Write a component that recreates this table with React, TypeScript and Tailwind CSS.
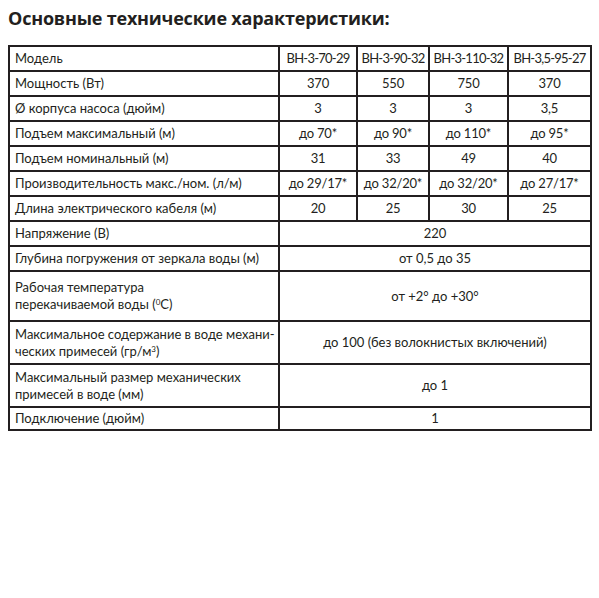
import React from 'react';

type Row = { label: React.ReactNode; values: string[]; h?: string };

const rows: Row[] = [
  { label: 'Модель', values: ['ВН-3-70-29', 'ВН-3-90-32', 'ВН-3-110-32', 'ВН-3,5-95-27'] },
  { label: 'Мощность (Вт)', values: ['370', '550', '750', '370'] },
  { label: 'Ø корпуса насоса (дюйм)', values: ['3', '3', '3', '3,5'] },
  { label: 'Подъем максимальный (м)', values: ['до 70*', 'до 90*', 'до 110*', 'до 95*'] },
  { label: 'Подъем номинальный (м)', values: ['31', '33', '49', '40'] },
  { label: 'Производительность макс./ном. (л/м)', values: ['до 29/17*', 'до 32/20*', 'до 32/20*', 'до 27/17*'] },
  { label: 'Длина электрического кабеля (м)', values: ['20', '25', '30', '25'] },
  { label: 'Напряжение (В)', values: ['220'] },
  { label: 'Глубина погружения от зеркала воды (м)', values: ['от 0,5 до 35'] },
  {
    label: (
      <>
        Рабочая температура
        <br />
        перекачиваемой воды (<sup className="text-[8px]">0</sup>С)
      </>
    ),
    values: ['от +2° до +30°'],
    h: 'h-[50px]',
  },
  {
    label: (
      <>
        Максимальное содержание в воде механи-
        <br />
        ческих примесей (гр/м<sup className="text-[8px]">3</sup>)
      </>
    ),
    values: ['до 100 (без волокнистых включений)'],
    h: 'h-[43px]',
  },
  {
    label: (
      <>
        Максимальный размер механических
        <br />
        примесей в воде (мм)
      </>
    ),
    values: ['до 1'],
    h: 'h-[43px]',
  },
  { label: 'Подключение (дюйм)', values: ['1'], h: 'h-[23px]' },
];

export default function App() {
  return (
    <div className="w-[599px] h-[598px] bg-white text-[#231f20] font-['Lato',sans-serif]">
      <h1 className="pl-[8px] pt-[6px] text-[18px] leading-[24px] font-bold tracking-[-0.2px] font-['Open_Sans',sans-serif]">
        Основные технические характеристики:
      </h1>
      <table className="ml-[8px] mt-[15px] w-[582px] table-fixed border-collapse border-2 border-[#231f20] text-[13px] leading-[17px]">
        <colgroup>
          <col className="w-[270px]" />
          <col className="w-[78px]" />
          <col className="w-[72px]" />
          <col className="w-[79px]" />
          <col className="w-[83px]" />
        </colgroup>
        <tbody>
          {rows.map((r, i) => (
            <tr key={i} className={r.h ?? 'h-[25px]'}>
              <td className="border-2 border-[#231f20] px-[5px] py-0 whitespace-nowrap">
                {r.label}
              </td>
              {r.values.length === 1 ? (
                <td colSpan={4} className="border-2 border-[#231f20] text-center">
                  {r.values[0]}
                </td>
              ) : (
                r.values.map((v, j) => (
                  <td
                    key={j}
                    className={`border-2 border-[#231f20] text-center whitespace-nowrap px-0 overflow-hidden ${
                      i === 0 ? 'tracking-[-0.75px]' : 'tracking-[-0.2px]'
                    }`}
                  >
                    {v}
                  </td>
                ))
              )}
            </tr>
          ))}
        </tbody>
      </table>
    </div>
  );
}
